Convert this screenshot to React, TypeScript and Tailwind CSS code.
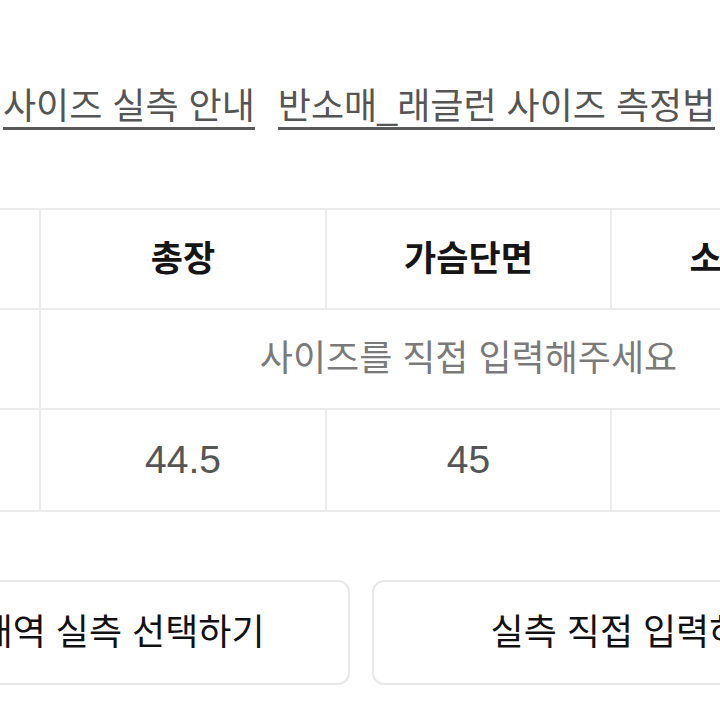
import React from "react";

const font = { fontFamily: '"Liberation Sans", "Noto Sans CJK KR", sans-serif' };

export default function App() {
  return (
    <div
      className="relative h-[720px] w-[720px] overflow-hidden bg-white"
      style={font}
    >
      {/* links */}
      <div className="flex gap-[23px] pl-[3px] pt-[86px] text-[36px] text-[#555555]">
        <span className="inline-block whitespace-nowrap border-b-[3px] border-[#5a5a5a] leading-[41px]">
          사이즈 실측 안내
        </span>
        <span className="inline-block whitespace-nowrap border-b-[3px] border-[#5a5a5a] leading-[41px]">
          반소매_래글런 사이즈 측정법
        </span>
      </div>

      {/* table */}
      <div className="-ml-[63px] mt-[78px] grid w-[963px] grid-cols-[100px_284px_283px_284px] grid-rows-[98px_98px_100px] gap-[2px] bg-[#ebebeb] p-[2px]">
        <div className="bg-white" />
        <div className="flex items-center justify-center bg-white text-[35px] font-bold text-[#151515]">
          총장
        </div>
        <div className="flex items-center justify-center bg-white text-[35px] font-bold text-[#151515]">
          가슴단면
        </div>
        <div className="flex items-center justify-center bg-white text-[35px] font-bold text-[#151515]">
          소매길이
        </div>

        <div className="bg-white" />
        <div className="col-span-3 flex items-center justify-center bg-white text-[36px] text-[#7a7a7a]">
          사이즈를 직접 입력해주세요
        </div>

        <div className="bg-white" />
        <div className="flex items-center justify-center bg-white text-[39px] text-[#555555]">
          44.5
        </div>
        <div className="flex items-center justify-center bg-white text-[39px] text-[#555555]">
          45
        </div>
        <div className="flex items-center justify-center bg-white text-[39px] text-[#555555]">
          20
        </div>
      </div>

      {/* buttons */}
      <div className="-ml-[172px] mt-[68px] flex gap-[22px]">
        <div className="flex h-[105px] w-[522px] shrink-0 items-center justify-center whitespace-nowrap rounded-[12px] border-2 border-[#e8e8e8] bg-white text-[36px] text-[#111111]">
          구매내역 실측 선택하기
        </div>
        <div className="flex h-[105px] w-[522px] shrink-0 items-center justify-center whitespace-nowrap rounded-[12px] border-2 border-[#e8e8e8] bg-white text-[36px] text-[#111111]">
          실측 직접 입력하기
        </div>
      </div>
    </div>
  );
}
